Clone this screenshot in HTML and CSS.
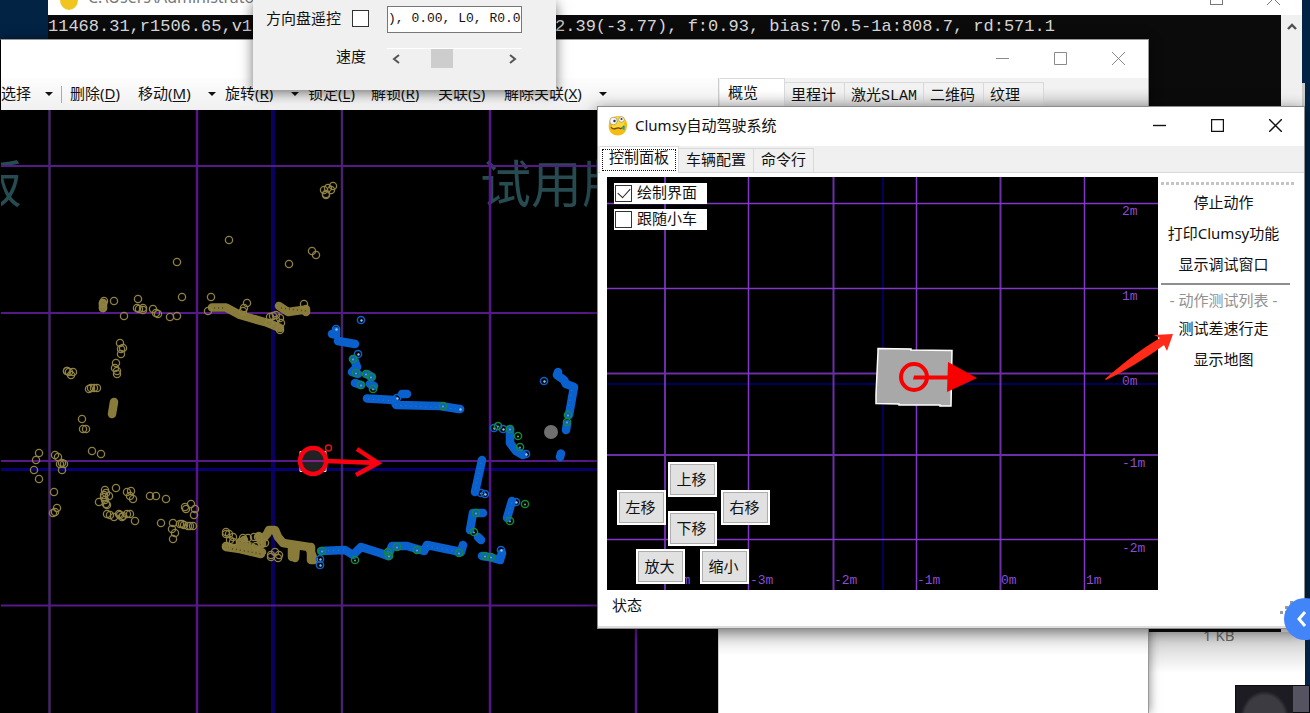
FILE: index.html
```html
<!DOCTYPE html>
<html lang="zh-CN">
<head>
<meta charset="utf-8">
<title>Clumsy自动驾驶系统</title>
<link rel="stylesheet" href="styles.css">
</head>
<body>
<main class="desktop">

  <section class="window explorer">
    <p class="file-size">1 KB</p>
  </section>

  <section class="window console">
    <header class="console-title">
      <span class="console-icon"></span>
      <span class="console-path">C:\Users\Administrator</span>
      <span class="console-max"></span>
      <svg class="console-close" width="13" height="13" viewBox="0 0 13 13"><path d="M0 0L13 13M13 0L0 13" stroke="#777" fill="none"/></svg>
    </header>
    <div class="console-body">
      <p class="console-line"><span>11468.31,r1506.65,v1</span><span>2.39(-3.77), f:0.93, bias:70.5-1a:808.7, rd:571.1</span></p>
      <div class="console-scroll"><svg width="10" height="7" viewBox="0 0 10 7"><path d="M1 6L5 2L9 6" stroke="#505050" stroke-width="2.4" fill="none"/></svg></div>
    </div>
  </section>

  <section class="window map-window">
    <header class="titlebar inactive">
      <button class="cap" aria-label="最小化"><svg width="13" height="13" viewBox="0 0 13 13"><path d="M0 6.500H13"/></svg></button>
      <button class="cap" aria-label="最大化"><svg width="13" height="13" viewBox="0 0 13 13"><path d="M.5 .5H12.500V12.500H.5Z"/></svg></button>
      <button class="cap" aria-label="关闭"><svg width="13" height="13" viewBox="0 0 13 13"><path d="M0 0L13 13M13 0L0 13"/></svg></button>
    </header>
    <div class="map-main">
      <div class="map-left">
        <nav class="toolbar">
          <button class="tool divided">选择<i class="caret"></i></button>
          <button class="tool">删除(<u>D</u>)</button>
          <button class="tool">移动(<u>M</u>)<i class="caret"></i></button>
          <button class="tool">旋转(<u>R</u>)<i class="caret"></i></button>
          <button class="tool">锁定(<u>L</u>)</button>
          <button class="tool">解锁(<u>R</u>)</button>
          <button class="tool">关联(<u>S</u>)</button>
          <button class="tool last">解除关联(<u>X</u>)<i class="caret"></i></button>
        </nav>
        <svg class="map-canvas" viewBox="1 110 717 603" preserveAspectRatio="xMinYMin slice">
          <defs>
            <marker id="olive" markerUnits="userSpaceOnUse" markerWidth="10" markerHeight="10" refX="5" refY="5"><circle cx="5" cy="5" r="3.6" fill="none" stroke="#8f8244" stroke-width="1.3"/></marker>
            <marker id="blue" markerUnits="userSpaceOnUse" markerWidth="10" markerHeight="10" refX="5" refY="5"><circle cx="5" cy="5" r="3.6" fill="none" stroke="#0b62cc" stroke-width="1.500"/><circle cx="5.500" cy="5.500" r="1.200" fill="#9cc4e8"/></marker>
            <marker id="green" markerUnits="userSpaceOnUse" markerWidth="10" markerHeight="10" refX="5" refY="5"><circle cx="5" cy="5" r="3.6" fill="none" stroke="#148a38" stroke-width="1.500"/><circle cx="5" cy="5.500" r="1" fill="#79a894"/></marker>
          </defs>
          <g class="watermark"><text x="480" y="203">试用版</text><text x="-29" y="203">版</text></g>
          <g fill="none">
            <path d="M273 110V713" stroke="#0b005c" stroke-width="4"/>
            <path d="M1 469.500H718" stroke="#080070" stroke-width="3"/>
            <path d="M49.500 110V713M342 110V713" stroke="#452567" stroke-width="2.500"/>
            <path d="M197 110V713M490 110V713M636 110V713" stroke="#551687" stroke-width="2.500"/>
            <path d="M1 166H718M1 313H718M1 461H718M1 605.500H718" stroke="#561a88" stroke-width="2"/>
          </g>
          <g fill="none" stroke="#897c3b" stroke-width="8.500" stroke-linecap="round" stroke-linejoin="round">
            <path d="M212 307.500L226 307.500L240 315L268 323L280 328M279 306L288 312L306 309.500M306 309V312M114 402L112 414M103 303V308M226 547L240 549L261 554M240 542L262 552M244 540V550M259 536L262 544M262 540L267 534L269 530H275L278 537L283 543L309 547L314 560M296 545L295 558M292 545V557M311 547V560"/>
          </g>
          <g fill="none" stroke="#4c4522" stroke-width="1.500" stroke-dasharray="1 3">
            <path d="M214 308L226 308M281 308L306 311M236 540L262 545M228 548L261 554M248 541L254 546"/>
          </g>
          <path class="rings-olive" fill="none" d="M229 240L177 262L289 264L312 251L316 255L182 297L211 297L114 301L104 301L103 304L103 308L138 299L137 308L143 308L143 310L139 309L124 316L153 309L156 313L158 314L170 317L177 316L208 311L247 303L244 308L243 311L304 304L273 316L276 315L280 318L281 323L280 330L270 317L269 323L276 320L120 343L123 348L121 354L116 363L115 368L117 371L117 374L67 371L71 375L73 372L69 372L89 389L91 388L94 388L97 388L82 419L83 429L86 429L39 453L36 460L34 470L39 479L92 451L101 454L55 455L58 457L60 464L64 464L62 470L62 463L54 492L57 508L55 512L53 513L116 488L105 490L104 495L104 497L109 496L99 502L106 504L107 505L127 492L131 491L130 496L133 499L107 514L110 515L114 517L120 515L122 517L119 514L123 516L127 514L130 514L135 521L150 496L156 496L166 499L161 523L173 523L172 529L175 533L173 539L180 524L182 524L184 525L188 526L190 526L193 526L186 509L191 504L195 509L194 515L185 507L226 532L226 534L229 534L233 537L233 542L243 538L248 538L254 537L226 546L230 540L271 555L275 552L279 555L278 558L271 557L256 546L265 543L258 537L324 190L326 194L328 188L331 190L333 186L326 195L121 349L67 371L105 500L106 493L103 303"/>
          <g fill="none" stroke="#0a61cd" stroke-width="8.500" stroke-linecap="round" stroke-linejoin="round">
            <path d="M336 331L336 335L332 334M338 341L355 344M354 359L357 367L352 372L358 374M355 383L361 385M367 374L372 377M370 384L374 386M402 394L407 394M367 398.500L394 400L396 405L440 406L459 409M558 372L557 375L564 380L566 384L574 387L569 415M567 424L566 430M510 429L510 443L516 451L523 455M561 453.500L560 457M482 460L475 492M483 513L473 513L470 530M478 537L481 540M512 501L507 518M482 556L489 557L500 560L502 553M321 551L345 550L353 555L361 547L380 553L388 556L392 546L407 546L424 551L427 545L461 552L463 545"/>
          </g>
          <path fill="none" stroke="#357bc9" stroke-dasharray="1 4" d="M368 399L394 401L396 405L459 409M481 463L475 492M572 390L567 415M427 546L460 552M323 551L345 550M512 503L507 518"/>
          <path class="rings-blue" fill="none" d="M361 320L336 329L358 354L397 398L544 381L526 454L494 428L503 429L481 493L485 494L516 502L320 565L320 559L501 550L460 409"/>
          <path class="rings-green" fill="none" d="M353 359L356 373L361 385L366 374L371 377L373 389L443 406L568 415L567 422L498 426L510 429L518 436L520 447L476 513L474 532L525 504L510 521L322 551L355 560L388 552L389 556L397 547L417 550L459 553L485 556L491 557"/>
          <circle cx="551" cy="432" r="7" fill="#6f6f6f"/>
          <path d="M300 451.500H326V471.500H300Z" fill="#222" stroke="#e8e8e8"/>
          <circle cx="313" cy="461" r="13" fill="#222" stroke="#fa0010" stroke-width="4.500"/>
          <path d="M302 461H324" stroke="#842090" stroke-width="2"/>
          <circle cx="328.500" cy="448" r="3" fill="none" stroke="#df1515" stroke-width="1.500"/>
          <path d="M327 461L377 463M357 449L378 463L356 475" fill="none" stroke="#fa0010" stroke-width="4.500"/>
        </svg>
      </div>
      <aside class="map-side">
        <nav class="tabs side-tabs">
          <button class="tab active">概览</button><button class="tab">里程计</button><button class="tab">激光SLAM</button><button class="tab">二维码</button><button class="tab">纹理</button>
        </nav>
        <div class="side-page"></div>
      </aside>
    </div>
  </section>

  <section class="window remote">
    <label class="remote-row">方向盘遥控 <input type="checkbox" class="box"></label>
    <input class="remote-value" type="text" aria-label="方向盘数值" value="), 0.00, L0, R0.0">
    <span class="remote-label">速度</span>
    <div class="slider">
      <button aria-label="减速"><svg width="8" height="10" viewBox="0 0 8 10"><path d="M7 1L2 5L7 9"/></svg></button>
      <span class="thumb"></span>
      <button aria-label="加速"><svg width="8" height="10" viewBox="0 0 8 10"><path d="M1 1L6 5L1 9"/></svg></button>
    </div>
  </section>

  <section class="window clumsy">
    <header class="titlebar">
      <svg class="logo" width="20" height="21" viewBox="0 0 20 21">
        <path d="M10 1C15.500 1 19.500 5 19 11C18.500 17 15 20.500 10 20.500C5 20.500 1 17 .7 12C.3 5 4.500 1 10 1Z" fill="#f3bd14"/>
        <path d="M4 4C8 0 15 1 17 6L15 12L4 13Z" fill="#fbd83a"/>
        <circle cx="5.500" cy="6" r="3.800" fill="#f4f4ee" stroke="#9b8f68" stroke-width=".7"/><circle cx="13.500" cy="4.500" r="2.800" fill="#f4f4ee" stroke="#9b8f68" stroke-width=".7"/>
        <circle cx="6.500" cy="6" r="1.200" fill="#333"/><circle cx="13.500" cy="4" r="1" fill="#333"/>
        <path d="M3 12C6 17 9 11 12 13.500C14 14.500 15 12 16 11" fill="none" stroke="#77440a" stroke-width="1.300"/><path d="M13 12.500L17 11L16.500 15L14 14Z" fill="#36a18e"/>
      </svg>
      <h1 class="title">Clumsy自动驾驶系统</h1>
      <button class="cap" aria-label="最小化"><svg width="13" height="13" viewBox="0 0 13 13"><path d="M0 6.500H13"/></svg></button>
      <button class="cap" aria-label="最大化"><svg width="13" height="13" viewBox="0 0 13 13"><path d="M.5 .5H12.500V12.500H.5Z"/></svg></button>
      <button class="cap" aria-label="关闭"><svg width="13" height="13" viewBox="0 0 13 13"><path d="M0 0L13 13M13 0L0 13"/></svg></button>
    </header>
    <nav class="tabs main-tabs">
      <button class="tab active"><span class="focus">控制面板</span></button><button class="tab">车辆配置</button><button class="tab">命令行</button>
    </nav>
    <div class="panel">
      <div class="view">
        <svg class="view-canvas" viewBox="607 177 551 413" preserveAspectRatio="xMinYMin slice">
          <g fill="none">
            <path d="M883 177V590M607 384H1158" stroke="#00005e" stroke-width="2"/>
            <path d="M665 177V590M833.500 177V590M1000.500 177V590M607 373.500H1158M607 455H1158" stroke="#6a2fa6" stroke-width="2"/>
            <path d="M748.500 177V590M916.500 177V590M1084.500 177V590M607 203.500H1158M607 288.500H1158M607 539.500H1158" stroke="#8038c6" stroke-width="1.500"/>
          </g>
          <g class="ticks">
            <text x="1122" y="215">2m</text><text x="1122" y="300">1m</text><text x="1122" y="385">0m</text><text x="1122" y="467">-1m</text><text x="1122" y="552">-2m</text>
            <text x="667" y="584">-4m</text><text x="750" y="584">-3m</text><text x="834" y="584">-2m</text><text x="917" y="584">-1m</text><text x="1001" y="584">0m</text><text x="1086" y="584">1m</text>
          </g>
          <path d="M878 348.500L911 349L911 350L952 350.500L951 406H940L940 405H899V404L876 403.500V394L878 352Z" fill="#a8a8a8" stroke="#fff" stroke-width="1.500"/>
          <circle cx="914" cy="377" r="13" fill="none" stroke="#f70000" stroke-width="4"/>
          <path d="M914 375.500H948V379.500H913Z M948 362L977 378L947 392Z" fill="#f70000"/>
        </svg>
        <div class="options">
          <label class="option"><input type="checkbox" class="box" checked><span>绘制界面</span></label>
          <label class="option"><input type="checkbox" class="box"><span>跟随小车</span></label>
        </div>
        <button class="key up">上移</button>
        <button class="key left">左移</button>
        <button class="key right">右移</button>
        <button class="key down">下移</button>
        <button class="key zoom-in">放大</button>
        <button class="key zoom-out">缩小</button>
      </div>
      <aside class="actions">
        <button class="action">停止动作</button>
        <button class="action">打印Clumsy功能</button>
        <button class="action">显示调试窗口</button>
        <hr class="rule">
        <p class="action muted">- 动作测试列表 -</p>
        <button class="action">测试差速行走</button>
        <button class="action">显示地图</button>
      </aside>
    </div>
    <footer class="status"><span>状态</span>
      <svg width="13" height="13" viewBox="0 0 13 13"><path d="M10 0h3v3h-3zM5 5h3v3h-3zM10 5h3v3h-3zM0 10h3v3h-3zM5 10h3v3h-3zM10 10h3v3h-3z" fill="#9a9a9a"/></svg>
    </footer>
  </section>

  <svg class="pointer" width="68" height="48" viewBox="0 0 68 48"><path d="M0 45C15 32 33 17 55 4L49 1L68 0L62 17L59 11C40 25 18 38 1 46Z" fill="#ff2a17"/></svg>

  <button class="drawer" aria-label="展开"><svg width="10" height="18" viewBox="0 0 10 18"><path d="M8 2L2 9L8 16" fill="none" stroke="#fff" stroke-width="3"/></svg></button>
  <div class="thumbnail"><span class="thumb-main"></span></div>
</main>
</body>
</html>
```
FILE: styles.css
```css
* { box-sizing: border-box; }

body {
  margin: 0;
  font: 15px/20px "Noto Sans", "Noto Sans CJK SC", sans-serif;
  color: #111;
}

button, input { font: inherit; color: inherit; }
button { border: 0; padding: 0; background: none; }
p, h1 { margin: 0; }
svg { display: block; }

.desktop {
  position: relative;
  height: 100vh;
  overflow: hidden;
  background: #032345;
}

.window { position: absolute; background: #fff; }

/* file manager */
.explorer {
  left: 1100px;
  top: 83px;
  width: 205px;
  bottom: 0;
  padding: 542px 0 0 103px;
  background: linear-gradient(#ccc 0 551px, #fff 590px);
}
.file-size { font-size: 15px; color: #666; }

/* console */
.console { left: 48px; top: -22px; width: 1254px; height: 654px; }
.console-title {
  display: flex;
  align-items: center;
  gap: 10px;
  height: 37px;
  padding: 0 22px 0 12px;
  color: #777;
}
.console-icon { width: 18px; height: 20px; border-radius: 50%; background: #f0c520; margin-top: 6px; }
.console-path { flex: 1; font-size: 16px; }
.console-max { width: 13px; height: 13px; border: 1px solid #777; margin: 4px 34px 0 0; }
.console-close { margin-top: 4px; }
.console-body { display: flex; height: 617px; background: #0b0b0b; }
.console-line {
  display: flex;
  flex: 1;
  gap: 303px;
  font: 17px/24px "Liberation Mono", monospace;
  color: #d6d6d6;
  white-space: pre;
}
.console-scroll { width: 21px; padding: 8px 0 0 6px; background: #f0f0f0; }

/* shared title bar */
.titlebar { display: flex; align-items: center; height: 39px; padding-bottom: 2px; background: #fff; }
.cap { display: grid; place-items: center; width: 58px; height: 36px; }
.cap svg { fill: none; stroke: #111; stroke-width: 1.4; }
.inactive { justify-content: flex-end; padding-right: 1px; }
.inactive .cap svg { stroke: #8a8a8a; stroke-width: 1; }

/* map window */
.map-window {
  left: 0;
  top: 39px;
  width: 1149px;
  bottom: 0;
  display: flex;
  flex-direction: column;
  border: 1px solid #999;
  border-bottom: 0;
  border-left-color: #000;
  box-shadow: 0 0 10px rgba(0, 0, 0, .5);
}
.map-window .titlebar { height: 38px; flex: none; }
.map-main { display: flex; flex: 1; min-height: 0; }
.map-left { display: flex; flex-direction: column; width: 717px; }
.toolbar {
  display: grid;
  grid-template-columns: 69px 68px 87px 83px 63px 67px 66px 1fr;
  height: 32px;
  padding-bottom: 2px;
  background: linear-gradient(#fdfdfd, #f0f0f0);
}
.tool { display: flex; align-items: center; white-space: nowrap; }
.tool u { text-underline-offset: 2px; }
.divided { background: linear-gradient(#aaa, #aaa) 60px 8px / 1px 17px no-repeat; }
.caret {
  margin: 2px 9px 0 auto;
  border: 4px solid transparent;
  border-top-color: #111;
  border-bottom: 0;
}
.divided .caret { margin-right: 17px; }
.last .caret { margin-left: 17px; margin-right: 0; }
.map-canvas { flex: 1; width: 100%; min-height: 0; background: #000; }
.watermark { font: 51px "Noto Sans CJK SC", sans-serif; fill: #264b50; }
.rings-olive { marker: url(#olive); }
.rings-blue { marker: url(#blue); }
.rings-green { marker: url(#green); }

/* tabs */
.tabs { display: flex; align-items: flex-end; background: #f0f0f0; }
.tab {
  height: 24px;
  padding: 0 7px;
  border: 1px solid #d9d9d9;
  border-width: 1px 1px 0 0;
  background: #f0f0f0;
  font-family: "Liberation Mono", "Noto Sans CJK SC", monospace;
  white-space: nowrap;
}
.tab.active { background: #fff; }
.map-side { flex: 1; display: flex; flex-direction: column; border-left: 1px solid #ccc; }
.side-tabs { height: 28px; padding-left: 1px; background: linear-gradient(#f2f2f2 10px, #d4d4d4); }
.side-tabs .tab {
  min-width: 60px;
  padding: 4px 6px 0;
  text-align: left;
  background: linear-gradient(#f2f2f2 8px, #d9d9d9);
}
.side-tabs .active { height: 28px; width: 65px; padding: 4px 16px 0 8px; background: linear-gradient(#fff 12px, #e6e6e6); }
.side-page { flex: 1; background: linear-gradient(#ddd 521px, #fff 550px); }

/* steering popup */
.remote {
  left: 253px;
  top: 0;
  width: 303px;
  height: 90px;
  display: grid;
  grid-template-columns: 103px 135px;
  grid-template-rows: 27px 20px;
  gap: 15px 18px;
  padding: 6px 0 0 13px;
  background: #f0f0f0;
  box-shadow: 0 3px 12px rgba(0, 0, 0, .55);
}
.remote-row { display: flex; align-items: center; justify-content: space-between; padding-bottom: 3px; white-space: nowrap; }
.box {
  appearance: none;
  display: grid;
  place-items: center;
  width: 17px;
  height: 17px;
  margin: 0;
  border: 1px solid #333;
  background: #fff;
}
.box:checked::after {
  content: "";
  width: 11px;
  height: 6px;
  margin-bottom: 4px;
  border: solid #222;
  border-width: 0 0 1px 1px;
  transform: rotate(-48deg);
}
.remote-value {
  width: 135px;
  height: 27px;
  padding: 0 0 2px;
  border: 1px solid #777;
  background: #fff;
  font: 13px/20px "Liberation Mono", monospace;
}
.remote-label { line-height: 16px; text-align: right; padding-right: 3px; }
.slider { display: flex; justify-content: space-between; align-items: center; padding: 0 5px; border-top: 1px solid #fff; }
.slider svg { fill: none; stroke: #555; stroke-width: 2; }
.thumb { width: 22px; height: 19px; margin-right: 26px; background: #cdcdcd; }

/* vehicle control window */
.clumsy {
  left: 597px;
  top: 106px;
  width: 708px;
  height: 523px;
  display: flex;
  flex-direction: column;
  border: 1px solid #8c8c8c;
  box-shadow: 0 3px 14px rgba(0, 0, 0, .5);
}
.logo { margin: 0 7px 0 10px; }
.title { flex: 1; padding-bottom: 2px; font-size: 15px; font-weight: 400; }
.main-tabs { height: 27px; padding-left: 2px; border-bottom: 1px solid #d9d9d9; }
.main-tabs .tab { padding: 2px 7px 0; }
.main-tabs .tab.active { height: 27px; margin-bottom: -1px; padding: 0 2px; }
.focus { display: block; padding: 0 6px; border: 1px dotted #111; }
.panel { flex: 1; display: flex; gap: 3px; padding: 4px 8px 0 9px; min-height: 0; }
.view { position: relative; flex: 1; background: #000; }
.view-canvas { width: 100%; height: 100%; }
.ticks { font: 13px "Liberation Mono", monospace; fill: #8a4cd0; }
.options { position: absolute; left: 7px; top: 6px; display: grid; gap: 5px; }
.option { display: flex; align-items: center; gap: 5px; width: 93px; height: 21px; padding-left: 1px; background: #fff; white-space: nowrap; }
.option span { padding-bottom: 3px; }
.key {
  position: absolute;
  width: 49px;
  height: 35px;
  padding: 0 2px 2px 0;
  border: 2px solid #fff;
  outline: 1px solid #adadad;
  outline-offset: -3px;
  background: #e1e1e1;
}
.up { left: 61px; top: 285px; }
.down { left: 61px; top: 334px; }
.left { left: 10px; top: 313px; }
.right { left: 114px; top: 313px; }
.zoom-in { left: 29px; top: 372px; }
.zoom-out { left: 93px; top: 372px; }

.actions {
  width: 135px;
  display: flex;
  flex-direction: column;
  padding: 12px 6px 0 0;
  background: repeating-linear-gradient(90deg, #c4c4c4 0 3px, #fff 3px 5px) 0 5px / 100% 3px no-repeat;
}
.action { height: 31px; line-height: 25px; padding: 0 4px 4px 0; text-align: center; white-space: nowrap; }
.rule { width: 100%; height: 2px; margin: 1px 0 3px; border: 0; background: #8e8e8e; }
.muted { color: #919191; height: 27px; }
.status { display: flex; justify-content: space-between; height: 38px; padding: 5px 11px 0 14px; border-bottom: 2px solid #ddd; }
.status svg { margin-top: 6px; }

/* overlays */
.pointer { position: absolute; left: 1105px; top: 334px; }
.drawer {
  position: absolute;
  right: -16px;
  top: 598px;
  width: 42px;
  height: 42px;
  padding-left: 13px;
  border-radius: 50%;
  background: #4285f8;
}
.thumbnail { position: absolute; right: 0; bottom: 0; width: 75px; height: 28px; background: #55535f; border: 1px solid #0d0d10; }
.thumb-main {
  display: block;
  width: 57px;
  height: 27px;
  background: radial-gradient(ellipse at 50% 120%, #3c3b42 50%, #1d1c22 60%);
}
```
